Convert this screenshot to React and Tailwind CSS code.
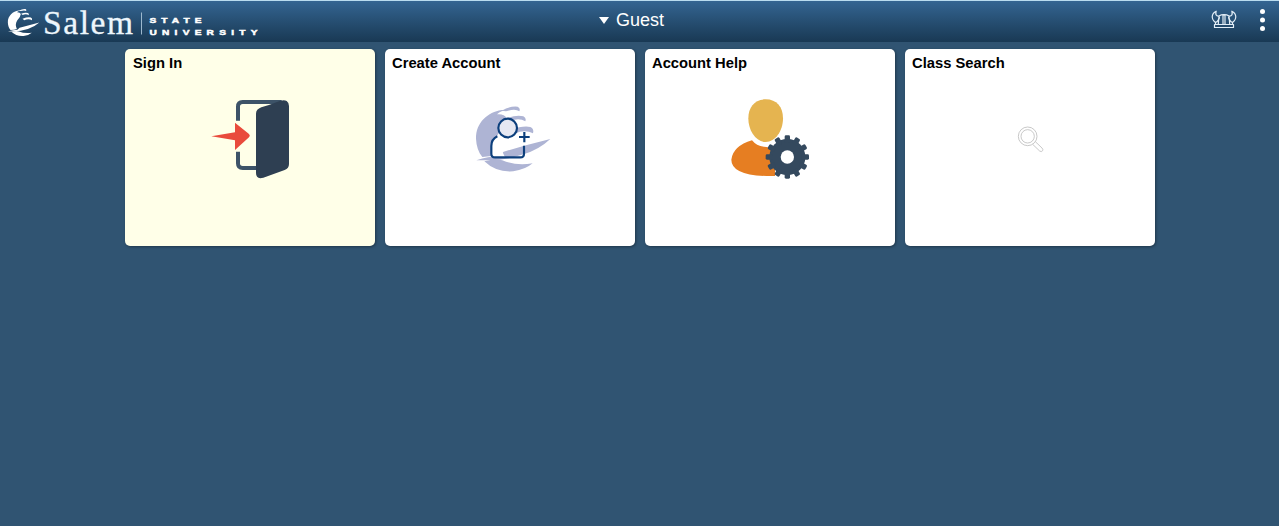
const tiles = [
  { title: "Sign In", icon: <DoorIcon />, active: true },
  { title: "Create Account", icon: <CreateAccountIcon /> },
  { title: "Account Help", icon: <AccountHelpIcon /> },
  { title: "Class Search", icon: <SearchIcon /> },
];

function ShipShape() {
  return (
    <g>
      <path d="M109 45 C70 51 32 82 33 131 C34 153 40 171 52 186 Q82 184 97 178 Q82 146 99 118 Q123 91 125 70 Q118 56 96 58 Q108 46 128 46 Z" />
      <path d="M110 47 Q138 32 158 35 Q167 39 163 49 Q151 40 123 49 Z" />
      <path d="M127 69 Q157 58 175 64 Q185 69 181 79 Q163 67 138 77 Z" />
      <path d="M137 105 Q174 91 196 96 Q208 101 204 115 Q179 102 149 116 Z" />
      <path d="M34 196 Q70 184 101 184 L116 170 L183 151 L256 132 Q222 164 175 178 Q124 195 74 196 Z" />
      <path d="M58 199 Q91 190 112 196 Q151 213 203 205 Q181 224 145 229 Q93 233 58 199 Z" />
    </g>
  );
}

function Logo() {
  return (
    <svg className="h-[41px] w-[265px]" viewBox="0 0 265 41" fill="#fff">
      <g transform="translate(3.2 3.2) scale(0.141 0.139)">
        <ShipShape />
      </g>
      <text
        x="43"
        y="33.2"
        fontFamily="Liberation Serif, serif"
        fontSize="33.5"
        textLength="90"
        fill="#edf6fc"
        stroke="#edf6fc"
        strokeWidth="0.3"
      >
        Salem
      </text>
      <path d="M141.5 11.5V33.5" stroke="#9db8cd" />
      <g
        transform="translate(149.5 0) scale(1.3 1)"
        fontFamily="Liberation Sans, sans-serif"
        fontSize="7.8"
        fontWeight="700"
        stroke="#fff"
        strokeWidth="0.5"
      >
        <text y="21.8" textLength="40">STATE</text>
        <text y="33.8" textLength="83">UNIVERSITY</text>
      </g>
    </svg>
  );
}

function HelmetIcon() {
  return (
    <svg className="h-5 w-[26px]" viewBox="0 0 26 20" fill="none" stroke="#e3eef7" strokeWidth="1.2" strokeLinejoin="round">
      <path d="M3.5 14.5H22.5V17.5H3.5Z" />
      <path d="M4.5 14V12.5M21.5 14V12.5M8 6Q10 4.7 13 4.7T18 6" />
      <path d="M12 14V5H14V14M8.5 7Q7.3 9.5 7.3 14M17.5 7Q18.7 9.5 18.7 14" />
      <path d="M4.5 12.5C-.2 9 .3 3.5 5.2 1.2C4.2 4.7 5.2 6.3 8 6C8.3 8.7 7 11.4 4.5 12.5Z" />
      <path d="M21.5 12.5C26.2 9 25.7 3.5 20.8 1.2C21.8 4.7 20.8 6.3 18 6C17.7 8.7 19 11.4 21.5 12.5Z" />
    </svg>
  );
}

function DoorIcon() {
  return (
    <svg className="mt-0.5 h-[100px] w-[100px]" viewBox="0 0 300 300">
      <path
        d="M114 92V50Q114 36 128 36H245M114 185V220Q114 234 128 234H172"
        fill="none"
        stroke="#3d5368"
        strokeWidth="12"
      />
      <path d="M168 71Q168 58 184 52Q205 46 225 38Q250 26 260 33Q267 38 267 48V222Q267 235 254 240L190 263Q168 269 168 249Z" fill="#2e3f52" />
      <path d="M34 139L105 127V98L147 132Q152 137 147 142L105 180V151Z" fill="#e94b3c" />
    </svg>
  );
}

function CreateAccountIcon() {
  return (
    <svg className="mb-[3px] ml-[4px] h-[85px] w-[95px]" viewBox="0 0 285 255">
      <g fill="#aeb4d4">
        <ShipShape />
      </g>
      <path d="M97 124Q79 133 79 153V176Q79 187 90 187H120L103 151Z" fill="#fff" />
      <circle cx="128" cy="99" r="28" fill="#e6e8f2" />
      <g fill="none" stroke="#0c3f7c" strokeWidth="6.5">
        <circle cx="128" cy="99" r="28" />
        <path d="M97 124Q79 133 79 153V176Q79 187 90 187H166Q177 187 177 176V152" />
        <path d="M178 111V142M162 126H194" />
      </g>
    </svg>
  );
}

function AccountHelpIcon() {
  return (
    <svg className="mt-0.5 h-[100px] w-[100px]" viewBox="0 0 300 300">
      <path d="M96 151Q111 170 139 171L165 176V258H140Q34 255 34 209Q39 168 96 151Z" fill="#e67e22" />
      <path d="M137 28C170 28 189 51 189 85C189 123 166 156 137 156S85 123 85 85C85 51 104 28 137 28Z" fill="#e5b450" />
      <g fill="#34495e">
        <circle cx="202" cy="201" r="54" />
        {Array.from({ length: 12 }).map((_, i) => (
          <rect key={i} x="194" y="136" width="16" height="22" rx="4" transform={`rotate(${i * 30} 202 201)`} />
        ))}
      </g>
      <circle cx="202" cy="201" r="20" fill="#fff" />
    </svg>
  );
}

function SearchIcon() {
  return (
    <svg className="mt-0.5 h-[50px] w-[50px]" viewBox="0 0 150 150" fill="none" stroke="#bdbdbd" strokeWidth="2.5">
      <circle cx="68" cy="64" r="28" />
      <circle cx="68" cy="64" r="20" />
      <path d="M83 88L104 108Q109 112 113 107Q115 103 111 99L91 80" />
    </svg>
  );
}

function Tile({ title, icon, active }) {
  return (
    <button
      className={`flex h-[197px] w-[250px] flex-col rounded-[5px] text-left shadow-[1px_1px_3px_rgba(0,0,0,0.35)] ${
        active ? "bg-[#ffffe8]" : "bg-white"
      }`}
    >
      <h2 className={`h-[27px] pt-1 text-[14.75px] leading-5 font-bold text-black ${active ? "pl-2" : "pl-[7px]"}`}>
        {title}
      </h2>
      <div className="flex h-[126px] w-full items-center justify-center">{icon}</div>
    </button>
  );
}

function App() {
  return (
    <div className="min-h-screen bg-[#305472] font-['Liberation_Sans',sans-serif]">
      <header className="grid h-[42px] grid-cols-[1fr_auto_1fr] border-t border-[#b9dcef] bg-linear-to-b from-[#346592] to-[#193954]">
        <Logo />
        <div className="flex items-center gap-[7px] pr-4 pb-1 text-lg leading-6 text-white">
          <svg className="mt-0.5 h-[7px] w-[10px]" viewBox="0 0 10 7" fill="#fff">
            <path d="M0 0H10L5 7Z" />
          </svg>
          <span>Guest</span>
        </div>
        <div className="flex items-center justify-end gap-[23px] pr-[14px] pb-1">
          <HelmetIcon />
          <svg className="h-[22px] w-[5px]" viewBox="0 0 5 22" fill="#fff">
            <circle cx="2.5" cy="2.5" r="2.5" />
            <circle cx="2.5" cy="11" r="2.5" />
            <circle cx="2.5" cy="19.5" r="2.5" />
          </svg>
        </div>
      </header>
      <main className="flex gap-[10px] pt-[7px] pl-[125px]">
        {tiles.map((tile) => (
          <Tile key={tile.title} {...tile} />
        ))}
      </main>
    </div>
  );
}

export default App;
